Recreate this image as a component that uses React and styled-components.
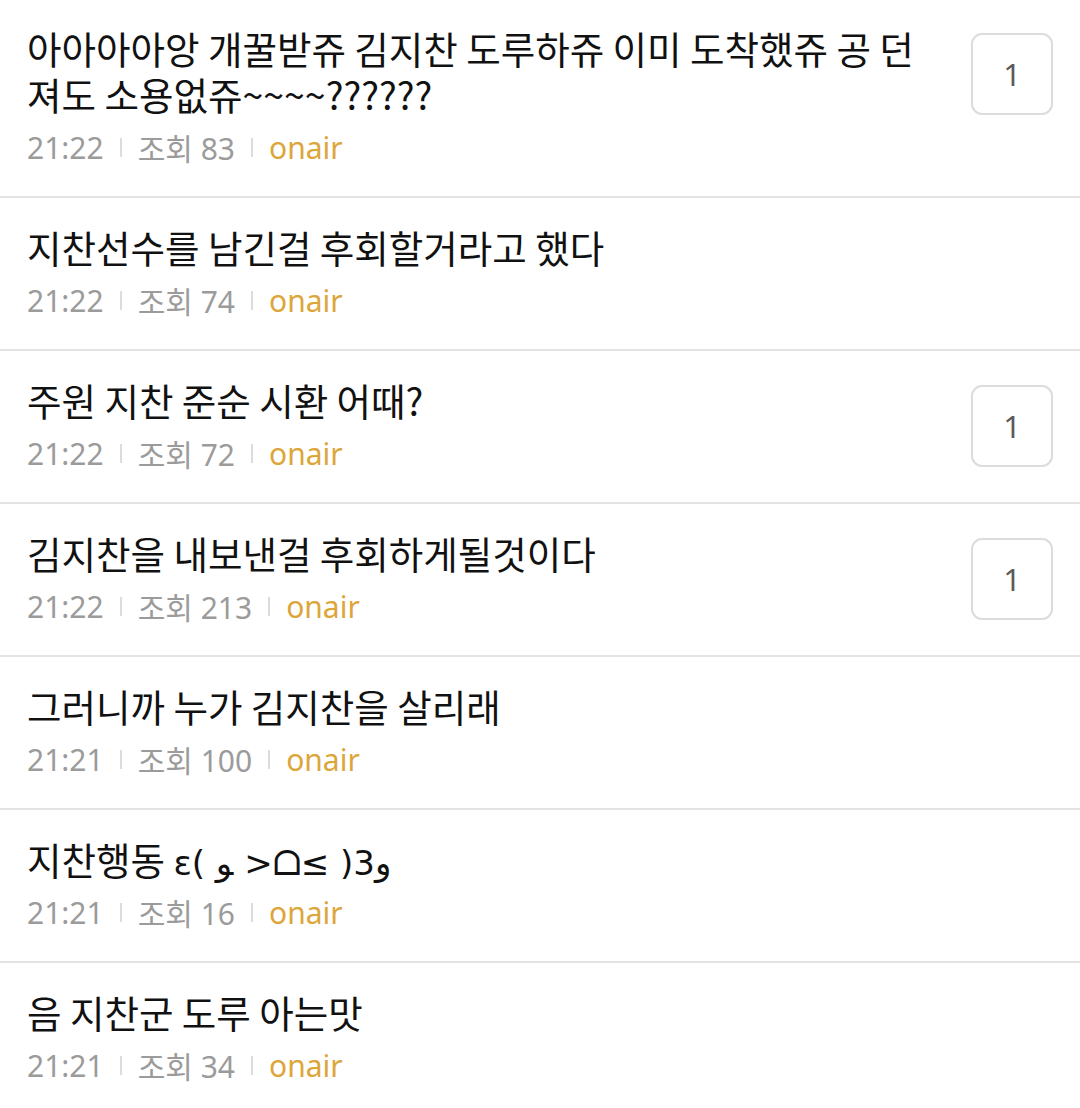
import React from 'react'
import styled, { createGlobalStyle } from 'styled-components'

const GlobalStyle = createGlobalStyle`
  html, body {
    margin: 0;
    padding: 0;
    background: #fff;
  }
  body {
    font-family: "Noto Sans", "Noto Sans CJK KR", "DejaVu Sans", sans-serif;
  }
`

const List = styled.ul`
  list-style: none;
  margin: 0;
  padding: 0;
  width: 1080px;
`

const Row = styled.li`
  display: flex;
  align-items: flex-start;
  padding: 26px 27px 29px 27px;
  border-bottom: 2px solid #e3e3e3;
  &:first-child {
    padding-top: 25px;
  }
`

const Content = styled.div`
  flex: 1;
  min-width: 0;
`

const Title = styled.div`
  font-family: "Noto Sans CJK KR", "Noto Sans", "DejaVu Sans", sans-serif;
  font-size: 37.5px;
  line-height: 46px;
  color: #111;
`

const Meta = styled.div`
  display: flex;
  align-items: center;
  margin-top: 10px;
  height: 40px;
  font-size: 30px;
  color: #9b9b9b;
`

const Divider = styled.span`
  width: 2px;
  height: 19px;
  margin: 0 16px;
  background: #dcdcdc;
`

const Author = styled.span`
  color: #dca63a;
`

const Badge = styled.div`
  flex: none;
  width: 78px;
  height: 78px;
  margin: 8px 0 0 30px;
  border: 2px solid #dcdcdc;
  border-radius: 11px;
  display: flex;
  align-items: center;
  justify-content: center;
  font-size: 31px;
  color: #5a5a5a;
`

const Face = styled.span`
  font-family: "DejaVu Sans", sans-serif;
  font-size: 34px;
  line-height: 0;
`

const posts = [
  { id: 1, title: '아아아아앙 개꿀받쥬 김지찬 도루하쥬 이미 도착했쥬 공 던져도 소용없쥬~~~~??????', time: '21:22', views: 83, comments: 1 },
  { id: 2, title: '지찬선수를 남긴걸 후회할거라고 했다', time: '21:22', views: 74 },
  { id: 3, title: '주원 지찬 준순 시환 어때?', time: '21:22', views: 72, comments: 1 },
  { id: 4, title: '김지찬을 내보낸걸 후회하게될것이다', time: '21:22', views: 213, comments: 1 },
  { id: 5, title: '그러니까 누가 김지찬을 살리래', time: '21:21', views: 100 },
  { id: 6, title: '지찬행동 ', face: 'ɛ( ﻮ >ᗝ≤ )3و', time: '21:21', views: 16 },
  { id: 7, title: '음 지찬군 도루 아는맛', time: '21:21', views: 34 },
]

const App = () => {
  return (
    <>
      <GlobalStyle />
      <List>
        {posts.map((p) => (
          <Row key={p.id}>
            <Content>
              <Title>
                {p.title}
                {p.face && <Face>{p.face}</Face>}
              </Title>
              <Meta>
                <span>{p.time}</span>
                <Divider />
                <span>조회 {p.views}</span>
                <Divider />
                <Author>onair</Author>
              </Meta>
            </Content>
            {p.comments && <Badge>{p.comments}</Badge>}
          </Row>
        ))}
      </List>
    </>
  )
}

export default App
